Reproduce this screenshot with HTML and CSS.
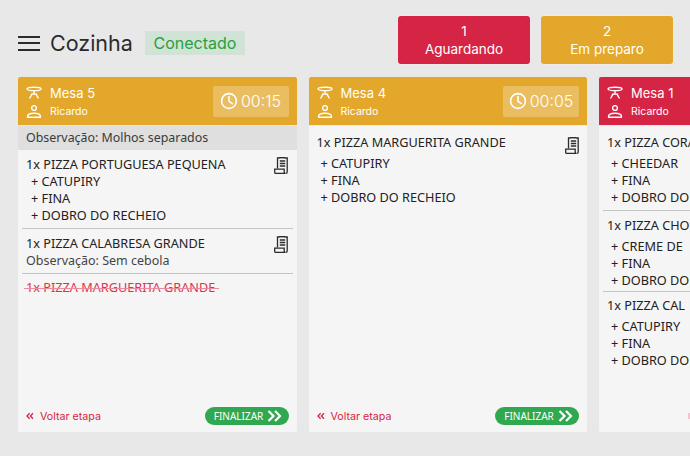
FILE: index.html
```html
<!DOCTYPE html>
<html lang="pt-BR">
<head>
  <meta charset="UTF-8">
  <title>Cozinha</title>
  <link rel="stylesheet" href="styles.css">
</head>
<body>

  <svg class="defs" width="0" height="0">
    <symbol id="table" viewBox="0 0 16 12">
      <ellipse cx="8" cy="2.4" rx="7" ry="1.7" fill="none" stroke="currentColor" stroke-width="1.4"/>
      <path d="M8 4v3.600M5.400 7.600h5.200M6 7.600L3.800 11.500M10 7.600l2.200 3.900" fill="none" stroke="currentColor" stroke-width="1.4" stroke-linecap="round"/>
    </symbol>
    <symbol id="user" viewBox="0 0 14 12">
      <circle cx="7" cy="2.800" r="2.200" fill="none" stroke="currentColor" stroke-width="1.3"/>
      <path d="M1 11.300c-.4-2.700 2.200-3.700 6-3.700s6.400 1 6 3.700z" fill="none" stroke="currentColor" stroke-width="1.3" stroke-linejoin="round"/>
    </symbol>
    <symbol id="clock" viewBox="0 0 18 18">
      <circle cx="9" cy="9" r="7.400" fill="none" stroke="currentColor" stroke-width="1.6"/>
      <path d="M9 4.600v4.800l3.400 2.200" fill="none" stroke="currentColor" stroke-width="1.6" stroke-linecap="round"/>
    </symbol>
    <symbol id="receipt" viewBox="0 0 15 17">
      <path d="M3.500 11.500V1h1.500l1-.8 1 .8 1-.8 1 .8 1-.8 1 .8h2.200v14c0 .8-.5 1.300-1.300 1.300" fill="none" stroke="currentColor" stroke-width="1.300"/>
      <path d="M5.800 4h5.400M5.800 6.500h5.400M5.800 9h5.400" stroke="currentColor" stroke-width="1.300"/>
      <path d="M.7 12.200h9.500v2.800c0 .9.500 1.400 1.300 1.400H1.700c-.6 0-1-.4-1-1z" fill="none" stroke="currentColor" stroke-width="1.300"/>
    </symbol>
    <symbol id="double" viewBox="0 0 15 12">
      <path d="M1.500 1l5 5-5 5M8 1l5 5-5 5" fill="none" stroke="currentColor" stroke-width="2.200"/>
    </symbol>
    <symbol id="back" viewBox="0 0 8 8">
      <path d="M3.600 1.200L1 4l2.600 2.800M7 1.200L4.400 4 7 6.800" fill="none" stroke="currentColor" stroke-width="1.300"/>
    </symbol>
  </svg>

  <header class="topbar">
    <div class="title-group">
      <div class="menu"><span></span><span></span><span></span></div>
      <h1>Cozinha</h1>
      <span class="status">Conectado</span>
    </div>
    <div class="tabs">
      <button class="tab red">1<br>Aguardando</button>
      <button class="tab amber">2<br>Em preparo</button>
    </div>
  </header>

  <main class="board">

    <section class="card">
      <div class="card-head amber">
        <div class="who">
          <div class="who-row"><svg class="ico"><use href="#table"/></svg><span class="mesa">Mesa 5</span></div>
          <div class="who-row"><svg class="ico"><use href="#user"/></svg><span class="waiter">Ricardo</span></div>
        </div>
        <div class="timer"><svg class="clock"><use href="#clock"/></svg>00:15</div>
      </div>
      <div class="obs-bar">Observação: Molhos separados</div>
      <div class="items">
        <div class="item">
          <svg class="receipt"><use href="#receipt"/></svg>
          <div class="item-name">1x PIZZA PORTUGUESA PEQUENA</div>
          <div class="extra">+ CATUPIRY</div>
          <div class="extra">+ FINA</div>
          <div class="extra">+ DOBRO DO RECHEIO</div>
        </div>
        <div class="item">
          <svg class="receipt"><use href="#receipt"/></svg>
          <div class="item-name">1x PIZZA CALABRESA GRANDE</div>
          <div class="item-note">Observação: Sem cebola</div>
        </div>
        <div class="item done">
          <div class="item-name">1x PIZZA MARGUERITA GRANDE</div>
        </div>
      </div>
      <div class="card-foot">
        <a class="back"><svg class="back-ico"><use href="#back"/></svg>Voltar etapa</a>
        <button class="finish">FINALIZAR<svg class="finish-ico"><use href="#double"/></svg></button>
      </div>
    </section>

    <section class="card">
      <div class="card-head amber">
        <div class="who">
          <div class="who-row"><svg class="ico"><use href="#table"/></svg><span class="mesa">Mesa 4</span></div>
          <div class="who-row"><svg class="ico"><use href="#user"/></svg><span class="waiter">Ricardo</span></div>
        </div>
        <div class="timer"><svg class="clock"><use href="#clock"/></svg>00:05</div>
      </div>
      <div class="items spaced">
        <div class="item">
          <svg class="receipt"><use href="#receipt"/></svg>
          <div class="item-name">1x PIZZA MARGUERITA GRANDE</div>
          <div class="extra">+ CATUPIRY</div>
          <div class="extra">+ FINA</div>
          <div class="extra">+ DOBRO DO RECHEIO</div>
        </div>
      </div>
      <div class="card-foot">
        <a class="back"><svg class="back-ico"><use href="#back"/></svg>Voltar etapa</a>
        <button class="finish">FINALIZAR<svg class="finish-ico"><use href="#double"/></svg></button>
      </div>
    </section>

    <section class="card">
      <div class="card-head red">
        <div class="who">
          <div class="who-row"><svg class="ico"><use href="#table"/></svg><span class="mesa">Mesa 1</span></div>
          <div class="who-row"><svg class="ico"><use href="#user"/></svg><span class="waiter">Ricardo</span></div>
        </div>
      </div>
      <div class="items spaced">
        <div class="item">
          <div class="item-name">1x PIZZA CORAÇÃO GRANDE</div>
          <div class="extra">+ CHEEDAR</div>
          <div class="extra">+ FINA</div>
          <div class="extra">+ DOBRO DO RECHEIO</div>
        </div>
        <div class="item tight">
          <div class="item-name">1x PIZZA CHOCOLATE</div>
          <div class="extra">+ CREME DE</div>
          <div class="extra">+ FINA</div>
          <div class="extra">+ DOBRO DO RECHEIO</div>
        </div>
        <div class="item">
          <div class="item-name">1x PIZZA CAL</div>
          <div class="extra">+ CATUPIRY</div>
          <div class="extra">+ FINA</div>
          <div class="extra">+ DOBRO DO RECHEIO</div>
        </div>
      </div>
      <div class="card-foot">
        <span class="next-edge"></span>
      </div>
    </section>

  </main>

</body>
</html>
```

FILE: styles.css
```css
* {
  box-sizing: border-box;
}

html, body {
  height: 100%;
}

body {
  margin: 0;
  background: #e8e8e8;
  font-family: "Noto Sans", sans-serif;
  color: #222;
  overflow: hidden;
  padding: 16px 0 24px 18px;
  display: flex;
  flex-direction: column;
}

.defs {
  position: absolute;
}

.amber {
  background: #e3a82b;
}

.red {
  background: #d62544;
}

/* top bar */
.topbar {
  display: flex;
  justify-content: space-between;
  align-items: flex-start;
  padding-right: 17px;
  height: 61px;
  flex: none;
}

.title-group {
  display: flex;
  align-items: center;
  margin-top: 15px;
}

.menu {
  width: 22px;
  margin-right: 10px;
}

.menu span {
  display: block;
  height: 2px;
  background: #2b2b2b;
  margin-bottom: 4.5px;
}

.menu span:last-child {
  margin-bottom: 0;
}

h1 {
  margin: 0;
  font-family: Inter, sans-serif;
  font-size: 21.5px;
  font-weight: 400;
  line-height: 24px;
  width: 95px;
  color: #2b2b2b;
}

.status {
  background: #d0e3d6;
  color: #23a23f;
  font-family: Inter, sans-serif;
  font-size: 16px;
  width: 100px;
  height: 24px;
  line-height: 24px;
  text-align: center;
}

.tabs {
  display: flex;
  gap: 11px;
}

.tab {
  width: 132px;
  height: 48px;
  border: none;
  box-shadow: 0 0 0 1px #f0eaea;
  border-radius: 3px;
  color: #fff;
  font-family: Inter, sans-serif;
  font-size: 13.5px;
  line-height: 18px;
  padding: 0;
}

/* cards */
.board {
  display: flex;
  gap: 12px;
  flex: 1;
  min-height: 0;
}

.card {
  flex: 0 0 278.5px;
  background: #f5f5f5;
  border-radius: 2px;
  display: flex;
  flex-direction: column;
  overflow: hidden;
}

.card-head {
  height: 49px;
  flex: none;
  color: #fff;
  display: flex;
  align-items: center;
  justify-content: space-between;
  padding: 2px 8px 0;
  border-bottom: 1px solid #e8e8e8;
}

.who-row {
  display: flex;
  align-items: center;
  height: 19px;
}

.ico {
  width: 16px;
  height: 13px;
  margin-right: 8px;
}

.mesa {
  font-family: Inter, sans-serif;
  font-size: 13px;
}

.waiter {
  font-family: Inter, sans-serif;
  font-size: 10.5px;
}

.timer {
  width: 76px;
  height: 31px;
  margin-top: -2px;
  background: rgba(255, 255, 255, 0.25);
  border-radius: 2px;
  display: flex;
  align-items: center;
  justify-content: center;
  font-family: Inter, sans-serif;
  font-size: 16px;
  font-weight: 300;
}

.clock {
  width: 18px;
  height: 18px;
  margin-right: 3px;
}

.obs-bar {
  background: #dfdfdf;
  height: 24px;
  line-height: 24px;
  padding-left: 8px;
  font-size: 12.4px;
  color: #3a3a3a;
  flex: none;
}

.items {
  flex: 1;
  padding: 0 8px;
}

.item {
  position: relative;
  white-space: nowrap;
  margin: 0 -4px;
  padding: 5.5px 0 4.5px 4px;
  border-bottom: 1px solid #c4c4c4;
}

.item:last-child {
  border-bottom: none;
}

.item.tight {
  padding-bottom: 2px;
}

.item-name,
.extra {
  font-size: 12.7px;
  line-height: 17px;
}

.extra {
  padding-left: 5px;
}

.item-note {
  font-size: 12.5px;
  line-height: 17px;
  color: #444;
}

/* cards without the observation bar sit lower and keep extras apart from the name */
.spaced {
  padding-top: 2px;
}

.spaced .item-name {
  margin-bottom: 4px;
}

.spaced .extra {
  padding-left: 4px;
}

.done .item-name {
  position: relative;
  width: fit-content;
  margin-top: -1px;
  color: #e0324f;
}

.done .item-name:after {
  content: '';
  position: absolute;
  left: -2px;
  right: -4px;
  top: 9px;
  height: 1px;
  background: #ec8b9b;
}

.receipt {
  position: absolute;
  top: 7px;
  right: 3.5px;
  width: 15px;
  height: 17px;
  color: #2b2b2b;
}

.spaced .receipt {
  top: 9px;
}

.card-foot {
  display: flex;
  justify-content: space-between;
  align-items: center;
  height: 25px;
  padding: 0 8px 7px;
  flex: none;
}

.back {
  display: flex;
  align-items: center;
  color: #d62544;
  font-family: Inter, sans-serif;
  font-size: 10.7px;
}

.back-ico {
  width: 8px;
  height: 8px;
  margin-right: 6px;
}

.finish {
  width: 84px;
  height: 18px;
  border: none;
  border-radius: 9px;
  background: #2fa84f;
  color: #fff;
  font-family: "Noto Sans", sans-serif;
  font-size: 10px;
  padding: 0 0 0 3px;
  display: flex;
  align-items: center;
  justify-content: center;
  gap: 4px;
}

.finish-ico {
  width: 15px;
  height: 12px;
}

.next-edge {
  width: 2px;
  height: 6px;
  margin-left: 81px;
  background: #f5c3cd;
}
```
